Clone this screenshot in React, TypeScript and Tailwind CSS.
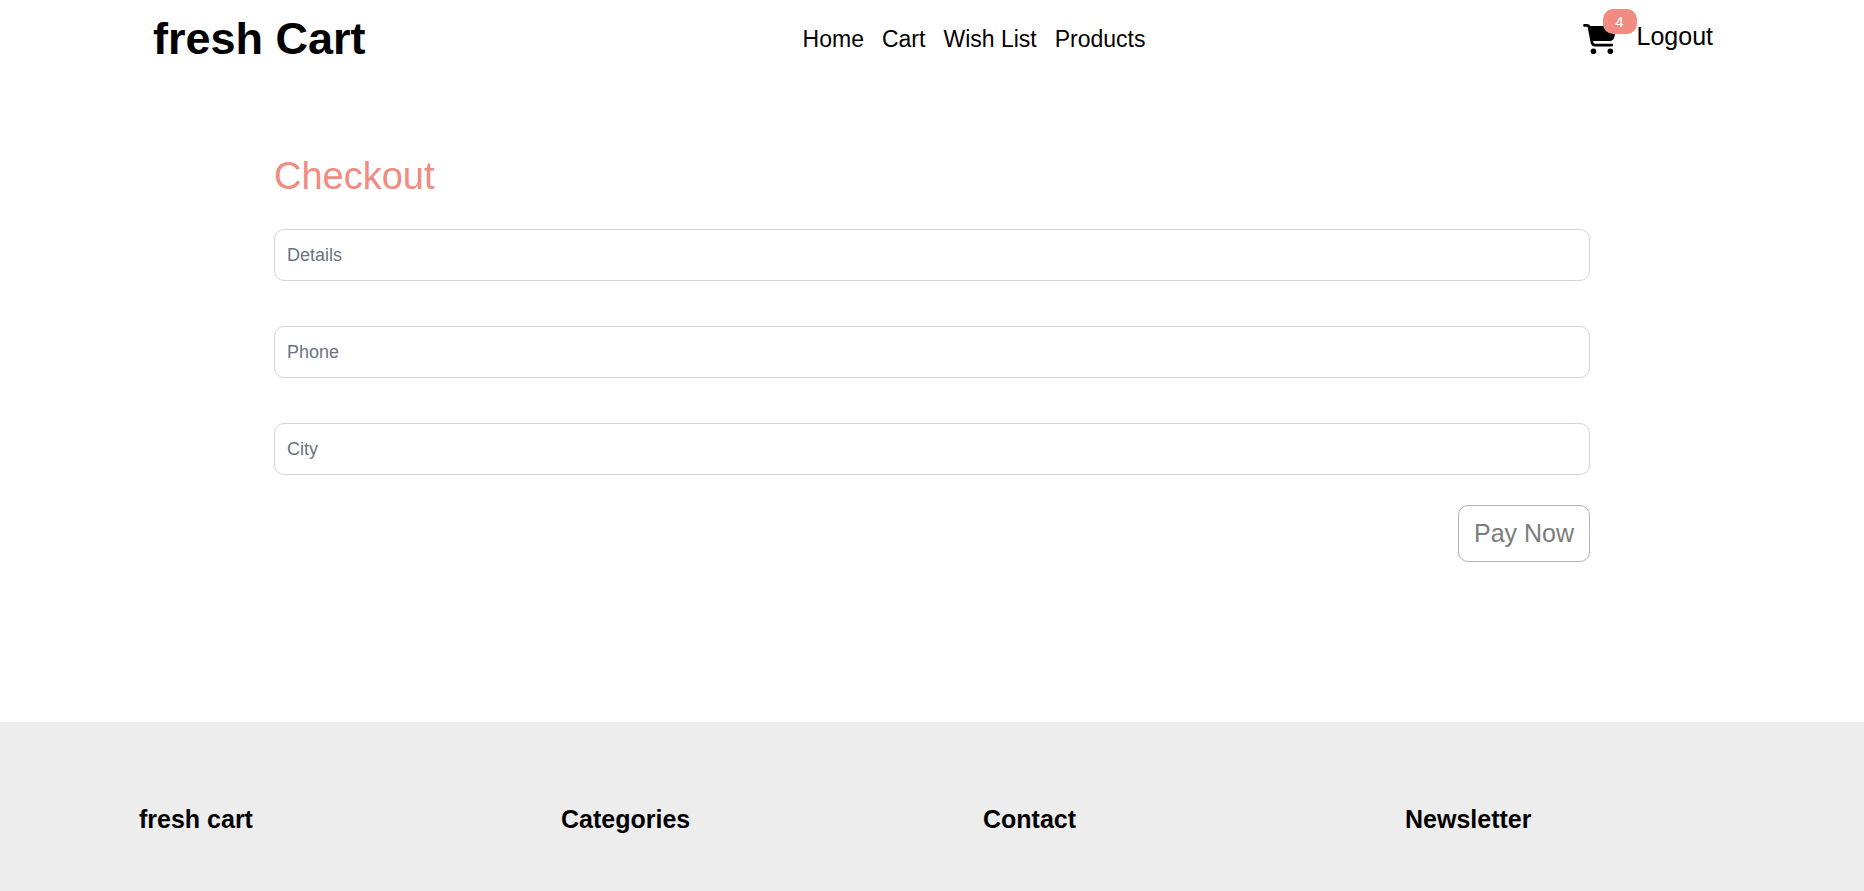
import { FaCartShopping } from "react-icons/fa6";

const links = ["Home", "Cart", "Wish List", "Products"];

const fields = [
  { name: "details", placeholder: "Details", type: "text" },
  { name: "phone", placeholder: "Phone", type: "tel" },
  { name: "city", placeholder: "City", type: "text" },
];

const footerSections = ["fresh cart", "Categories", "Contact", "Newsletter"];

function Header() {
  return (
    <header className="flex min-h-[78px] items-center justify-between pr-[151px] pl-[153px]">
      <a href="#home" className="text-[45px] leading-[50px] font-bold whitespace-nowrap">
        fresh Cart
      </a>
      <nav className="flex gap-[18px] text-[23px] leading-6 whitespace-nowrap">
        {links.map((link) => (
          <a key={link} href="#">
            {link}
          </a>
        ))}
      </nav>
      <div className="flex items-center gap-5">
        <a href="#cart" aria-label="Cart" className="relative block">
          <FaCartShopping className="h-[30px] w-[34px]" />
          <span className="absolute -top-[15px] left-5 flex h-[25px] w-[34px] items-center justify-center rounded-[10px] bg-[#f28b82] text-[15px] leading-5 text-white">
            4
          </span>
        </a>
        <button type="button" className="pb-1.5 text-[25px] leading-7">
          Logout
        </button>
      </div>
    </header>
  );
}

function CheckoutForm() {
  return (
    <main className="grow px-4 pt-[77px] pb-40">
      <form className="mx-auto flex w-full max-w-[1316px] flex-col">
        <h1 className="mb-8 text-[38px] leading-[42px] text-[#f28b82]">Checkout</h1>
        <div className="flex flex-col gap-[45px]">
          {fields.map((field) => (
            <input
              key={field.name}
              name={field.name}
              type={field.type}
              aria-label={field.placeholder}
              placeholder={field.placeholder}
              className="h-[52px] w-full rounded-[10px] border border-gray-300 px-3 text-[18px] placeholder:text-gray-500"
            />
          ))}
        </div>
        <button
          type="button"
          className="mt-[30px] h-[57px] self-end rounded-[10px] border border-[#b2b2b2] px-[15px] pb-0.5 text-[25px] leading-7 text-[#7c7c7c]"
        >
          Pay Now
        </button>
      </form>
    </main>
  );
}

function Footer() {
  return (
    <footer className="bg-[#ededed] px-[88px] pt-[83px] pb-[58px]">
      <div className="grid grid-cols-4">
        {footerSections.map((title) => (
          <h2 key={title} className="pl-[51px] text-[25px] leading-7 font-bold">
            {title}
          </h2>
        ))}
      </div>
    </footer>
  );
}

export default function App() {
  return (
    <div className="flex min-h-screen flex-col bg-white font-['Liberation_Sans',Arial,sans-serif] text-black">
      <Header />
      <CheckoutForm />
      <Footer />
    </div>
  );
}
